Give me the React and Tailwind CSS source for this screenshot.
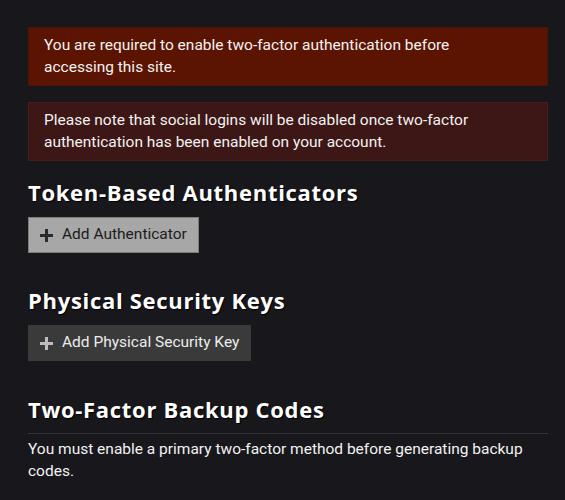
const Plus = ({ color }) => (
  <svg width="13" height="13" viewBox="0 0 13 13" className="shrink-0">
    <rect x="5" y="0" width="3" height="13" fill={color} />
    <rect x="0" y="5" width="13" height="3" fill={color} />
  </svg>
)

const Heading = ({ children, className = '' }) => (
  <h2
    className={`text-[22px] leading-[26px] tracking-[0.7px] font-bold text-white [font-family:'Open_Sans',sans-serif] [text-shadow:1px_1px_1px_#000] ${className}`}
  >
    {children}
  </h2>
)

export default function App() {
  return (
    <div className="min-h-[500px] w-[565px] bg-[#18181c] pt-[27px] pl-[28px] pr-[17px] text-[15.5px] leading-[21.5px] text-[#f2f2f2] [font-family:Roboto,sans-serif]">
      {/* Alerts */}
      <div className="border border-[#4e1408] bg-[#5b1402] pl-[15px] pr-10 pt-[7px] pb-[7px]">
        You are required to enable two-factor authentication before accessing this site.
      </div>
      <div className="mt-4 border border-[#481a1a] bg-[#3d1616] pl-[15px] pr-4 pt-[7px] pb-[7px]">
        Please note that social logins will be disabled once two-factor authentication has been enabled on your account.
      </div>

      {/* Token-Based Authenticators */}
      <Heading className="mt-[18px]">Token-Based Authenticators</Heading>
      <button className="mt-3 flex h-[36px] items-center gap-[9px] border border-[#7c7c7c] bg-[#a7a7a7] pl-[11px] pr-[11px] text-[15.5px] text-[#1c1c1c]">
        <Plus color="#2a2a2a" />
        Add Authenticator
      </button>

      {/* Physical Security Keys */}
      <Heading className="mt-[34px]">Physical Security Keys</Heading>
      <button className="mt-3 flex h-[36px] items-center gap-[9px] bg-[#3a3a3a] pl-[12px] pr-[12px] text-[15.5px] text-[#ececec]">
        <Plus color="#bdbdbd" />
        Add Physical Security Key
      </button>

      {/* Backup codes */}
      <Heading className="mt-[35px] border-b border-[#333338] pb-[11px]">Two-Factor Backup Codes</Heading>
      <p className="pt-[5px]">
        You must enable a primary two-factor method before generating backup codes.
      </p>
    </div>
  )
}
